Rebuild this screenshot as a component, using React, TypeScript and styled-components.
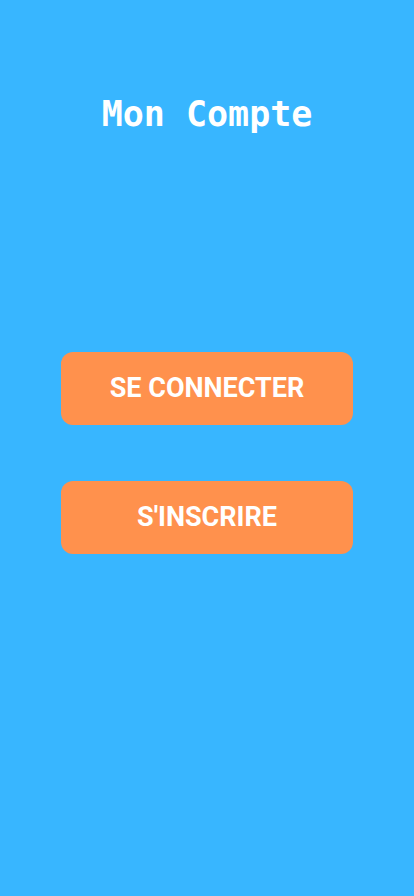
import React from "react";
import styled, { createGlobalStyle } from "styled-components";

const GlobalStyle = createGlobalStyle`
  *, *::before, *::after { box-sizing: border-box; }
  body { margin: 0; background: #38b6ff; }
`;

const Page = styled.main`
  display: flex;
  flex-direction: column;
  align-items: center;
  min-height: 100vh;
  padding: 90px 61px 0;
  background: #38b6ff;
`;

const Title = styled.h1`
  margin: 0 0 214px;
  color: #ffffff;
  font: 700 35px/48px "DejaVu Sans Mono", monospace;
  text-align: center;
  white-space: nowrap;
`;

const Actions = styled.div`
  display: flex;
  flex-direction: column;
  gap: 56px;
  width: 100%;
`;

const ActionButton = styled.button`
  width: 100%;
  height: 73px;
  padding: 0 0 2px;
  border: 0;
  border-radius: 12px;
  background: #ff914d;
  color: #ffffff;
  font: 700 27px/32px Roboto, sans-serif;
  text-transform: uppercase;
  cursor: pointer;
`;

export default function App() {
  return (
    <>
      <GlobalStyle />
      <Page>
        <Title>Mon Compte</Title>
        <Actions>
          <ActionButton type="button">Se connecter</ActionButton>
          <ActionButton type="button">S'inscrire</ActionButton>
        </Actions>
      </Page>
    </>
  );
}
